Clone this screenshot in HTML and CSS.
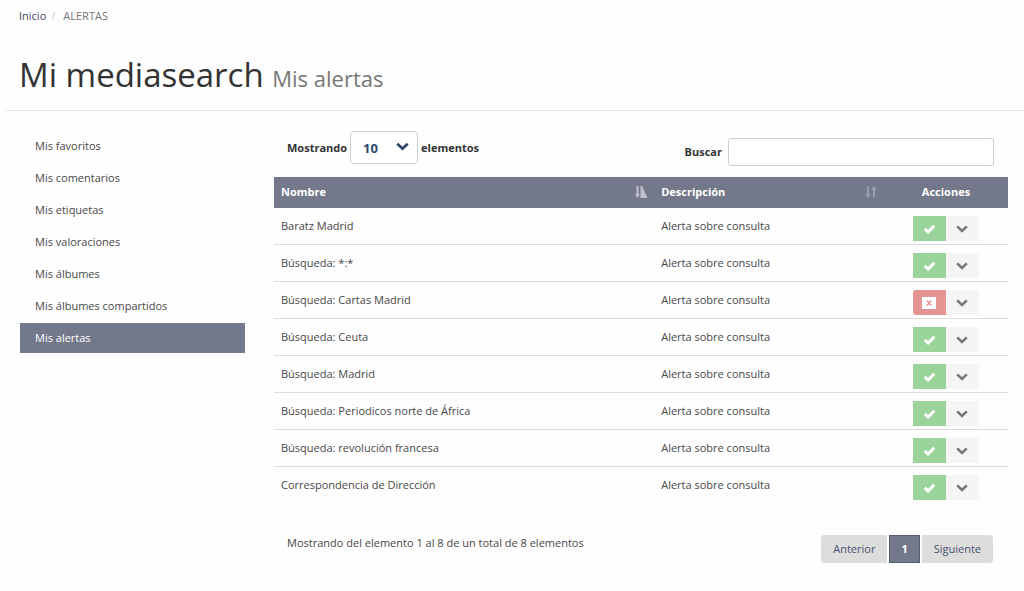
FILE: index.html
```html
<!DOCTYPE html>
<html lang="es">
<head>
<meta charset="utf-8">
<title>Mi mediasearch - Mis alertas</title>
<link rel="stylesheet" href="styles.css">
</head>
<body>
<svg class="sprite" aria-hidden="true">
  <symbol id="check" viewBox="0 0 12 10"><path d="M1.2 4.8 4.6 8 10.8 1.8" fill="none" stroke="currentColor" stroke-width="3"/></symbol>
  <symbol id="chevron" viewBox="0 0 12 8"><path d="M1.2 1.4 6 6 10.8 1.4" fill="none" stroke="currentColor" stroke-width="2.6"/></symbol>
  <symbol id="close" viewBox="0 0 14 12"><path fill="currentColor" fill-rule="evenodd" d="M0 0h14v12H0zM5.2 3 4.2 4 6.2 6 4.2 8l1 1L7 7.200 8.800 9l1-1L7.800 6l2-2-1-1L7 4.800z"/></symbol>
</svg>
<header class="page-header">
  <nav aria-label="Ruta">
    <ol class="breadcrumb">
      <li><a href="#">Inicio</a></li>
      <li>ALERTAS</li>
    </ol>
  </nav>
  <h1 class="title">Mi mediasearch <small>Mis alertas</small></h1>
</header>
<div class="layout">
  <nav class="sidebar" aria-label="Mi mediasearch">
    <a href="#">Mis favoritos</a>
    <a href="#">Mis comentarios</a>
    <a href="#">Mis etiquetas</a>
    <a href="#">Mis valoraciones</a>
    <a href="#">Mis álbumes</a>
    <a href="#">Mis álbumes compartidos</a>
    <a href="#" class="active" aria-current="page">Mis alertas</a>
  </nav>
  <main>
    <div class="toolbar">
      <div class="length">
        <label for="length">Mostrando</label>
        <span class="select-box">
          <select id="length"><option>10</option><option>25</option><option>50</option></select>
          <svg class="select-arrow"><use href="#chevron"/></svg>
        </span>
        <label for="length">elementos</label>
      </div>
      <div class="search">
        <label for="search">Buscar</label>
        <input id="search" type="search">
      </div>
    </div>
    <table class="alerts">
      <thead>
        <tr>
          <th class="col-name"><div class="sortable">Nombre
            <svg class="sort sorted" viewBox="0 0 12 12"><path fill="currentColor" d="M1.500 0h2v8h1.500L2.500 12 0 8h1.500zM5.500 0h2v2h1v2.500h1V7h1v2.500H12V12H5.500z"/></svg></div></th>
          <th class="col-desc"><div class="sortable">Descripción
            <svg class="sort" viewBox="0 0 12 12"><path fill="currentColor" d="M2 0h2v8h2l-3 4-3-4h2zM8 12V4H6l3-4 3 4h-2v8z"/></svg></div></th>
          <th class="col-actions">Acciones</th>
        </tr>
      </thead>
      <tbody>
        <tr><td>Baratz Madrid</td><td>Alerta sobre consulta</td><td><div class="actions"><button class="on" aria-label="Desactivar"><svg class="check"><use href="#check"/></svg></button><button class="more" aria-label="Opciones"><svg class="arrow"><use href="#chevron"/></svg></button></div></td></tr>
        <tr><td>Búsqueda: *:*</td><td>Alerta sobre consulta</td><td><div class="actions"><button class="on" aria-label="Desactivar"><svg class="check"><use href="#check"/></svg></button><button class="more" aria-label="Opciones"><svg class="arrow"><use href="#chevron"/></svg></button></div></td></tr>
        <tr><td>Búsqueda: Cartas Madrid</td><td>Alerta sobre consulta</td><td><div class="actions"><button class="off" aria-label="Activar"><svg class="close"><use href="#close"/></svg></button><button class="more" aria-label="Opciones"><svg class="arrow"><use href="#chevron"/></svg></button></div></td></tr>
        <tr><td>Búsqueda: Ceuta</td><td>Alerta sobre consulta</td><td><div class="actions"><button class="on" aria-label="Desactivar"><svg class="check"><use href="#check"/></svg></button><button class="more" aria-label="Opciones"><svg class="arrow"><use href="#chevron"/></svg></button></div></td></tr>
        <tr><td>Búsqueda: Madrid</td><td>Alerta sobre consulta</td><td><div class="actions"><button class="on" aria-label="Desactivar"><svg class="check"><use href="#check"/></svg></button><button class="more" aria-label="Opciones"><svg class="arrow"><use href="#chevron"/></svg></button></div></td></tr>
        <tr><td>Búsqueda: Periodicos norte de África</td><td>Alerta sobre consulta</td><td><div class="actions"><button class="on" aria-label="Desactivar"><svg class="check"><use href="#check"/></svg></button><button class="more" aria-label="Opciones"><svg class="arrow"><use href="#chevron"/></svg></button></div></td></tr>
        <tr><td>Búsqueda: revolución francesa</td><td>Alerta sobre consulta</td><td><div class="actions"><button class="on" aria-label="Desactivar"><svg class="check"><use href="#check"/></svg></button><button class="more" aria-label="Opciones"><svg class="arrow"><use href="#chevron"/></svg></button></div></td></tr>
        <tr><td>Correspondencia de Dirección</td><td>Alerta sobre consulta</td><td><div class="actions"><button class="on" aria-label="Desactivar"><svg class="check"><use href="#check"/></svg></button><button class="more" aria-label="Opciones"><svg class="arrow"><use href="#chevron"/></svg></button></div></td></tr>
      </tbody>
    </table>
    <div class="footer">
      <p>Mostrando del elemento 1 al 8 de un total de 8 elementos</p>
      <nav class="pager" aria-label="Paginación">
        <a href="#">Anterior</a>
        <a href="#" class="current" aria-current="page">1</a>
        <a href="#">Siguiente</a>
      </nav>
    </div>
  </main>
</div>
</body>
</html>
```
FILE: styles.css
```css
* { box-sizing: border-box; }
body {
  margin: 0;
  background: #fefefe;
  color: #484848;
  font: 11px/18px "Open Sans", "Noto Sans", sans-serif;
}
a { color: inherit; text-decoration: none; }
button, input, select { font: inherit; }
.sprite { display: none; }

.page-header {
  margin-left: 5px;
  padding: 7px 14px 10px;
  border-bottom: 1px solid #e8e8e8;
}
.breadcrumb {
  display: flex;
  margin: 0;
  padding: 0;
  list-style: none;
  color: #777;
}
.breadcrumb a { color: #3f4963; }
.breadcrumb li + li::before { content: "/"; padding: 0 8px 0 5px; color: #ccc; }
.title {
  margin: 28px 0 0;
  font-size: 33px;
  line-height: 44px;
  font-weight: 400;
  color: #333;
}
.title small { font-size: 22px; color: #777; }

.layout {
  display: grid;
  grid-template-columns: 225px 1fr;
  gap: 29px;
  padding: 20px 16px 0 20px;
}
.sidebar { display: flex; flex-direction: column; gap: 2px; }
.sidebar a { padding: 6px 15px; }
.sidebar .active { background: #73798a; color: #fff; }

.toolbar {
  display: flex;
  justify-content: space-between;
  align-items: flex-start;
  padding: 0 14px 11px 13px;
  color: #333;
  font-weight: 700;
}
.length, .search { display: flex; align-items: center; }
.length { gap: 3px; }
.search { gap: 6px; padding-top: 7px; }
.select-box { position: relative; }
.length select {
  display: block;
  width: 68px;
  height: 33px;
  padding: 0 12px;
  border: 1px solid #ccc;
  border-radius: 4px;
  background: #fff;
  color: #2f456b;
  font-size: 13px;
  appearance: none;
}
.select-arrow {
  position: absolute;
  top: 11px;
  right: 9px;
  width: 13px;
  height: 9px;
  color: #2f456b;
  pointer-events: none;
}
.search input {
  width: 266px;
  height: 28px;
  padding: 0 8px;
  border: 1px solid #ccc;
  border-radius: 3px;
  background: #fff;
}

.alerts { width: 100%; border-collapse: collapse; table-layout: fixed; }
.alerts th {
  padding: 6px 7px 7px;
  background: #73798a;
  color: #fff;
  text-align: left;
}
.alerts .col-name { width: 51.8%; }
.alerts .col-desc { width: 31.3%; }
.alerts .col-actions { text-align: center; }
.sortable { display: flex; justify-content: space-between; align-items: center; }
.sort { width: 12px; height: 12px; color: #979ca8; }
.sorted { color: #bfc2ca; }
.alerts td { padding: 9px 7px; }
.alerts td:last-child { padding: 8px 7px 3px; }
.alerts tbody tr + tr { border-top: 1px solid #ddd; }
.actions { display: flex; justify-content: center; }
.actions button {
  display: grid;
  place-items: center;
  width: 33px;
  height: 25px;
  padding: 0;
  border: 0;
}
.actions .on { background: #9bd49b; color: #fff; }
.actions .off { background: #e59494; color: #fff; border-radius: 3px 0 0 3px; }
.actions .more { background: #f5f5f5; color: #777; }
.check { width: 13px; height: 10px; }
.close { width: 14px; height: 12px; }
.arrow { width: 12px; height: 8px; }

.footer {
  display: flex;
  justify-content: space-between;
  align-items: center;
  padding: 31px 15px 0 13px;
}
.footer p { margin: 0 0 12px; }
.pager { display: flex; gap: 2px; color: #4a526e; }
.pager a { padding: 5px 12px; background: #ddd; }
.pager a:first-child { border-radius: 3px 0 0 3px; }
.pager a:last-child { border-radius: 0 3px 3px 0; }
.pager .current {
  padding: 4px 11px;
  border: 1px solid #555c72;
  background: #73798a;
  color: #fff;
  font-weight: 700;
}
```
